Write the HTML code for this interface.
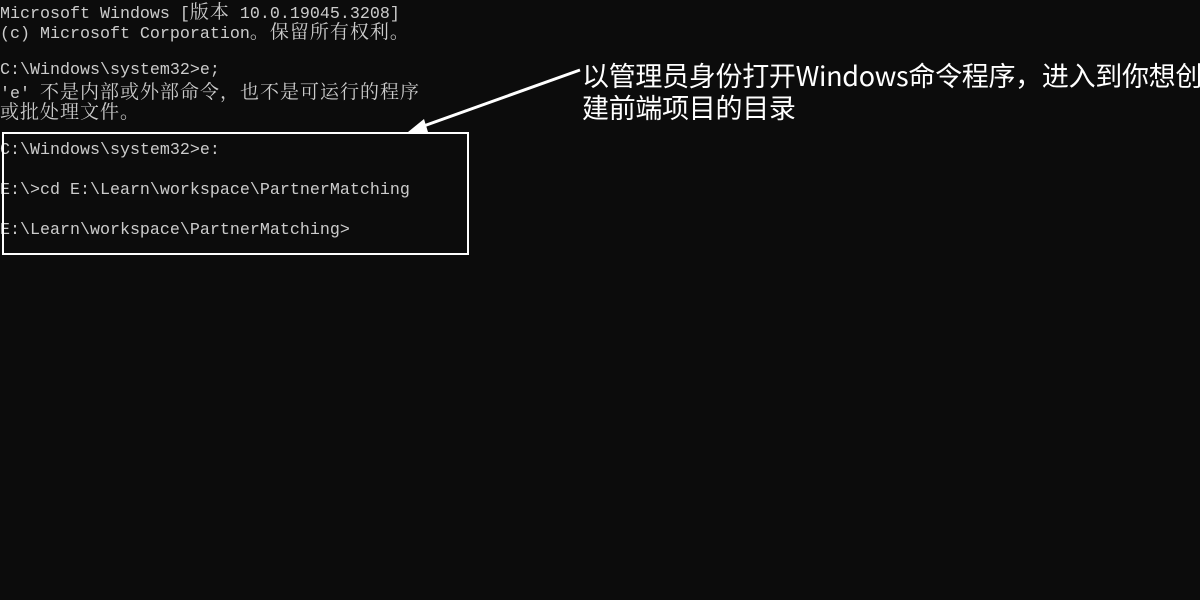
<!DOCTYPE html>
<html><head><meta charset="utf-8"><style>
html,body{margin:0;padding:0;background:#0c0c0c;width:1200px;height:600px;overflow:hidden;position:relative}
.con{position:absolute;left:0;top:1px;font-family:"Liberation Mono","Noto Serif CJK SC",monospace;font-size:16.67px;color:#cccccc}
.con div{height:20px;line-height:20px;white-space:pre;overflow:visible}
.cj{font-family:"Noto Serif CJK SC","Noto Sans CJK SC",serif;font-size:19px;line-height:20px;letter-spacing:1px}
.box{position:absolute;left:2px;top:132px;width:463px;height:119px;border:2px solid #fff}
.ann{position:absolute;left:582px;top:59px;font-family:"Noto Sans CJK SC","Liberation Sans",sans-serif;font-size:27px;line-height:32px;color:#fff;white-space:nowrap;letter-spacing:-0.3px}
</style></head><body>
<div class="con"><div>Microsoft Windows [<span class="cj">版本</span> 10.0.19045.3208]</div><div>(c) Microsoft Corporation<span class="cj">。保留所有权利。</span></div><div></div><div>C:\Windows\system32&gt;e;</div><div>'e' <span class="cj">不是内部或外部命令，也不是可运行的程序</span></div><div><span class="cj">或批处理文件。</span></div><div></div><div>C:\Windows\system32&gt;e:</div><div></div><div>E:\&gt;cd E:\Learn\workspace\PartnerMatching</div><div></div><div>E:\Learn\workspace\PartnerMatching&gt;</div></div>
<div class="box"></div>
<svg style="position:absolute;left:0;top:0" width="1200" height="600">
<line x1="580" y1="70" x2="418" y2="128" stroke="#fff" stroke-width="3"/>
<polygon points="408,132 424,119 428,132" fill="#fff"/>
</svg>
<div class="ann">以管理员身份打开Windows命令程序，进入到你想创<br>建前端项目的目录</div>
</body></html>
